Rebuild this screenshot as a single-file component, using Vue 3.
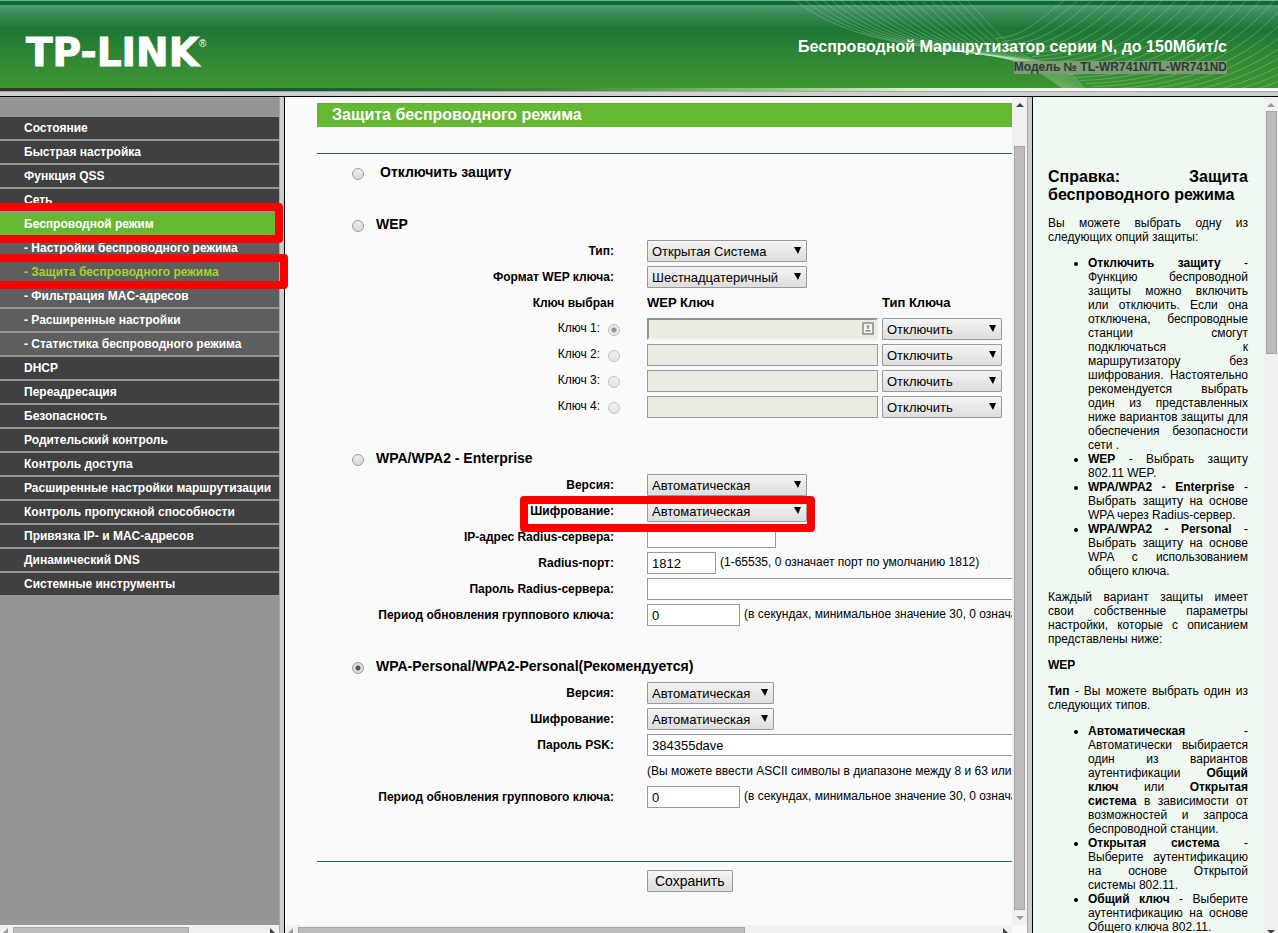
<script setup>
import { reactive, ref } from 'vue'

const menu = [
  { text: 'Состояние' },
  { text: 'Быстрая настройка' },
  { text: 'Функция QSS' },
  { text: 'Сеть' },
  { text: 'Беспроводной режим', kind: 'current', mark: 'mark-section' },
  { text: '- Настройки беспроводного режима', kind: 'sub' },
  { text: '- Защита беспроводного режима', kind: 'sub chosen', mark: 'mark-page' },
  { text: '- Фильтрация MAC-адресов', kind: 'sub' },
  { text: '- Расширенные настройки', kind: 'sub' },
  { text: '- Статистика беспроводного режима', kind: 'sub' },
  { text: 'DHCP' },
  { text: 'Переадресация' },
  { text: 'Безопасность' },
  { text: 'Родительский контроль' },
  { text: 'Контроль доступа' },
  { text: 'Расширенные настройки маршрутизации' },
  { text: 'Контроль пропускной способности' },
  { text: 'Привязка IP- и MAC-адресов' },
  { text: 'Динамический DNS' },
  { text: 'Системные инструменты' },
]

const mode = ref('psk')
const activeKey = ref(1)
const form = reactive({ keys: ['', '', '', ''], ip: '', port: '1812', secret: '', period: '0', psk: '384355dave', pskPeriod: '0' })

const fallingLines = Array.from({ length: 20 }, (_, i) =>
  `M${8 + i * 9} 0C${50 + i * 9} ${34 + i / 2} ${110 + i * 6} ${44 + i / 2} ${180 + i * 4} ${52 + i / 2}S${250 + i * 2} ${74 + i / 3} ${282 + i} 92`)
const risingLines = Array.from({ length: 26 }, (_, i) =>
  `M${208 + i * 6} ${38 + i * 3}C${236 + i * 10} ${36 + i * 3} ${250 + i * 13} ${20 + i * 2} ${276 + i * 14} 0`)
</script>

<template>
  <div class="page">
    <header class="banner">
      <svg class="waves" viewBox="0 0 490 88" preserveAspectRatio="xMaxYMid slice" aria-hidden="true">
        <path v-for="(d, i) in fallingLines" :key="'f' + i" :d="d" />
        <path v-for="(d, i) in risingLines" :key="'r' + i" :d="d" />
      </svg>
      <div class="logo">TP-LINK<sup>®</sup></div>
      <div class="product">
        <div class="product-name">Беспроводной Маршрутизатор серии N, до 150Мбит/с</div>
        <div class="product-model">Модель № TL-WR741N/TL-WR741ND</div>
      </div>
    </header>
    <div class="strip"></div>
    <div class="frames">
      <nav class="side">
        <ul class="menu">
          <li v-for="m in menu" :key="m.text" :class="m.kind">
            <a href="#">{{ m.text }}</a>
            <span v-if="m.mark" class="mark" :class="m.mark"></span>
          </li>
        </ul>
        <div class="hbar"><i class="arrow left dim"></i><i class="thumb side-thumb"></i><i class="arrow right"></i></div>
      </nav>
      <div class="divider"></div>
      <main class="center">
        <form class="form" @submit.prevent>
          <h1>Защита беспроводного режима</h1>
          <div class="rows">
            <div class="choice off">
              <input id="m-off" v-model="mode" type="radio" name="mode" value="off"><label for="m-off">Отключить защиту</label>
            </div>
            <div class="blank"></div>

            <div class="choice">
              <input id="m-wep" v-model="mode" type="radio" name="mode" value="wep"><label for="m-wep">WEP</label>
            </div>
            <div class="row">
              <label for="wep-type">Тип:</label>
              <span class="pick wide"><select id="wep-type"><option>Открытая Система</option></select></span>
            </div>
            <div class="row">
              <label for="wep-format">Формат WEP ключа:</label>
              <span class="pick wide"><select id="wep-format"><option>Шестнадцатеричный</option></select></span>
            </div>
            <div class="row heads"><span class="cap">Ключ выбран</span><b class="key-col">WEP Ключ</b><b>Тип Ключа</b></div>
            <div v-for="n in 4" :key="n" class="row key">
              <label :for="'key-' + n"><span class="key-name">Ключ {{ n }}:</span><input :id="'key-' + n" v-model="activeKey" type="radio" name="key" :value="n" disabled></label>
              <span class="key-field" :class="{ first: n === 1 }">
                <input v-model="form.keys[n - 1]" type="text" :aria-label="'WEP Ключ ' + n" disabled>
                <svg v-if="n === 1" viewBox="0 0 12 13" aria-hidden="true">
                  <rect x="1" y="1" width="10" height="11" fill="#f2f2ee" stroke="#8a8a8a" stroke-width="1.5" />
                  <circle cx="6" cy="4.5" r="1.3" fill="#888" /><path d="M5.3 5.5h1.4v1.6h-1.4zM3.5 8h5v1.5h-5z" fill="#888" />
                </svg>
              </span>
              <span class="pick key-type"><select :aria-label="'Тип Ключа ' + n" disabled><option>Отключить</option></select></span>
            </div>
            <div class="blank"></div>

            <div class="choice">
              <input id="m-ent" v-model="mode" type="radio" name="mode" value="ent"><label for="m-ent">WPA/WPA2 - Enterprise</label>
            </div>
            <div class="row">
              <label for="ent-ver">Версия:</label>
              <span class="pick wide"><select id="ent-ver"><option>Автоматическая</option></select></span>
            </div>
            <div class="row">
              <label for="ent-enc">Шифрование:</label>
              <span class="pick wide"><select id="ent-enc"><option>Автоматическая</option></select></span>
              <span class="mark mark-cipher"></span>
            </div>
            <div class="row">
              <label for="ip">IP-адрес Radius-сервера:</label><input id="ip" v-model="form.ip" class="w-ip" type="text">
            </div>
            <div class="row">
              <label for="port">Radius-порт:</label>
              <input id="port" v-model="form.port" class="w-port" type="text"><span class="hint">(1-65535, 0 означает порт по умолчанию 1812)</span>
            </div>
            <div class="row">
              <label for="secret">Пароль Radius-сервера:</label><input id="secret" v-model="form.secret" class="w-long" type="text">
            </div>
            <div class="row">
              <label for="period">Период обновления группового ключа:</label>
              <input id="period" v-model="form.period" class="w-period" type="text"><span class="hint">(в секундах, минимальное значение 30, 0 означает</span>
            </div>
            <div class="blank"></div>

            <div class="choice">
              <input id="m-psk" v-model="mode" type="radio" name="mode" value="psk"><label for="m-psk">WPA-Personal/WPA2-Personal(Рекомендуется)</label>
            </div>
            <div class="row">
              <label for="psk-ver">Версия:</label>
              <span class="pick narrow"><select id="psk-ver"><option>Автоматическая</option></select></span>
            </div>
            <div class="row">
              <label for="psk-enc">Шифрование:</label>
              <span class="pick narrow"><select id="psk-enc"><option>Автоматическая</option></select></span>
            </div>
            <div class="row">
              <label for="psk">Пароль PSK:</label><input id="psk" v-model="form.psk" class="w-long" type="text">
            </div>
            <div class="row">
              <span class="cap"></span><span class="note">(Вы можете ввести ASCII символы в диапазоне между 8 и 63 или</span>
            </div>
            <div class="row">
              <label for="psk-period">Период обновления группового ключа:</label>
              <input id="psk-period" v-model="form.pskPeriod" class="w-period" type="text"><span class="hint">(в секундах, минимальное значение 30, 0 означает</span>
            </div>
          </div>
          <div class="actions"><button type="submit">Сохранить</button></div>
        </form>
        <div class="vbar"><i class="arrow up"></i><i class="thumb center-vthumb"></i><i class="arrow down dim"></i></div>
        <div class="hbar"><i class="arrow left dim"></i><i class="thumb center-thumb"></i><i class="arrow right"></i></div>
      </main>
      <div class="divider right-divider"></div>
      <aside class="help">
        <div class="help-text">
          <h2>Справка: Защита беспроводного режима</h2>
          <p>Вы можете выбрать одну из следующих опций защиты:</p>
          <ul>
            <li><b>Отключить защиту</b> - Функцию беспроводной защиты можно включить или отключить. Если она отключена, беспроводные станции смогут подключаться к маршрутизатору без шифрования. Настоятельно рекомендуется выбрать один из представленных ниже вариантов защиты для обеспечения безопасности сети .</li>
            <li><b>WEP</b> - Выбрать защиту 802.11 WEP.</li>
            <li><b>WPA/WPA2 - Enterprise</b> - Выбрать защиту на основе WPA через Radius-сервер.</li>
            <li><b>WPA/WPA2 - Personal</b> - Выбрать защиту на основе WPA с использованием общего ключа.</li>
          </ul>
          <p>Каждый вариант защиты имеет свои собственные параметры настройки, которые с описанием представлены ниже:</p>
          <p><b>WEP</b></p>
          <p><b>Тип</b> - Вы можете выбрать один из следующих типов.</p>
          <ul>
            <li><b>Автоматическая</b> - Автоматически выбирается один из вариантов аутентификации <b>Общий ключ</b> или <b>Открытая система</b> в зависимости от возможностей и запроса беспроводной станции.</li>
            <li><b>Открытая система</b> - Выберите аутентификацию на основе Открытой системы 802.11.</li>
            <li><b>Общий ключ</b> - Выберите аутентификацию на основе Общего ключа 802.11.</li>
          </ul>
        </div>
        <div class="vbar"><i class="arrow up dim"></i><i class="thumb help-thumb"></i><i class="arrow down end"></i></div>
      </aside>
    </div>
  </div>
</template>

<style>
body { margin: 0; overflow: hidden; }
</style>

<style scoped>
* { box-sizing: border-box; }
.page {
  display: flex; flex-direction: column; height: 100vh; overflow: hidden;
  font-family: "Liberation Sans", Arial, sans-serif; font-size: 12px; line-height: 14px; color: #000;
}

.banner {
  position: relative; flex: none; display: flex; justify-content: space-between; height: 88px; padding: 0 51px 0 26px;
  border-top: 1px solid #74b48c; color: #fff;
  background: linear-gradient(#0c6838 0 4px, #519a70 4px, #35874f 15px, #1c7636 28px, #2c8434 50px, #3f9433 87px);
}
.waves { position: absolute; right: 0; top: 0; width: 490px; height: 100%; fill: none; stroke: #c8eccb; stroke-opacity: .28; stroke-width: 1; }
.logo { position: relative; margin-top: 32px; font: bold 39px/40px "DejaVu Sans", sans-serif; -webkit-text-stroke: 1px #fff; }
.logo sup { font: 10px/10px "Liberation Sans", sans-serif; vertical-align: 19px; -webkit-text-stroke: 0; }
.product { position: relative; display: flex; flex-direction: column; align-items: flex-end; padding-top: 36px; font-weight: bold; }
.product-name { font-size: 16px; line-height: 20px; }
.product-model { margin-top: 4px; line-height: 13px; color: #2e3a30; background: #7c9c78; }
.strip {
  flex: none; height: 9px; border-bottom: 1px solid #000;
  background: linear-gradient(#a8a8a8, #a8a8a8) 0 3px / 100% 1px no-repeat,
    linear-gradient(90deg, #38302c, #105c38 24%, #3f8c3c 45%, #8cc47c 60%, #e0f0d8 72%, #fff 90%) 0 0 / 100% 3px no-repeat, #cfcfcf;
}

.frames { flex: 1; min-height: 0; display: grid; grid-template-columns: 279px 6px minmax(0, 1fr) 6px 245px; }
.divider { background: #cdcdcd; border-left: 1px solid #a8a8a8; border-right: 1px solid #000; }

.side { display: flex; flex-direction: column; min-height: 0; background: #969696; }
.menu { flex: 1; margin: 0; padding: 20px 0 0; list-style: none; }
.menu li { position: relative; height: 22px; margin-bottom: 2px; background: #404040; }
.menu a { display: block; padding-left: 24px; line-height: 22px; font-weight: bold; color: #fff; text-decoration: none; white-space: nowrap; }
.menu .current { background: #65b932; }
.menu .sub { background: #5e5e5e; }
.menu .chosen a { color: #a6d42f; }

.mark { position: absolute; z-index: 2; border: 8px solid #f00; border-radius: 4px; pointer-events: none; }
.mark-section { left: -8px; right: -4px; top: -10px; height: 40px; }
.mark-page { left: -8px; right: -9px; top: -7px; height: 35px; }
.mark-cipher { left: 203px; width: 295px; top: -2px; height: 36px; }

.center { display: grid; grid-template: minmax(0, 1fr) 8px / minmax(0, 1fr) 15px; min-height: 0; background: #fafafa; }
.form { overflow: hidden; padding: 6px 0 0 32px; }
h1 { margin: 0; padding-left: 15px; font-size: 16px; line-height: 24px; color: #fff; background: #65b932; }
.rows { margin-top: 26px; padding: 6px 0 51px; border-top: 1px solid #1c7044; border-bottom: 1px solid #1c7044; }
.blank { height: 26px; }
.choice { display: flex; align-items: center; height: 26px; padding-left: 35px; gap: 12px; font-size: 14px; font-weight: bold; }
.choice input { margin-top: 2px; }
.choice label { line-height: 16px; padding-bottom: 2px; white-space: nowrap; }
.off { gap: 16px; }
.row { position: relative; display: flex; align-items: center; height: 26px; white-space: nowrap; }
.row > label, .cap { flex: none; width: 297px; margin-right: 33px; text-align: right; font-weight: bold; }
.row.key > label { display: flex; justify-content: flex-end; align-items: center; gap: 8px; width: 303px; margin-right: 27px; font-weight: normal; }
.key-name { padding-bottom: 2px; }
.key label input { margin-top: 2px; }
.heads b { font-size: 13px; }
.key-col { width: 235px; }

input, select, button { margin: 0; font-family: inherit; color: #000; }
input[type="text"] { flex: none; height: 22px; padding: 0 4px; border: 1px solid #9a9a9a; border-radius: 0; background: #fff; font-size: 13px; }
input[type="radio"] {
  flex: none; appearance: none; width: 12px; height: 12px; border: 1px solid #9c9c9c; border-radius: 50%;
  background: linear-gradient(#ececec, #d8d8d8);
}
input[type="radio"]:checked { background: radial-gradient(#555 0 2px, #dedede 3px); }
input[type="radio"]:disabled { opacity: .6; }
.w-ip { width: 129px; }
.w-port { width: 69px; }
.w-period { width: 93px; }
.w-long { width: 480px; }
.hint { margin-left: 4px; padding-bottom: 2px; }
.key-field { position: relative; flex: none; width: 231px; height: 22px; margin-right: 4px; }
.key-field input[type="text"] { width: 100%; background: #ebebe4; }
.first input[type="text"] { border: 2px solid; border-color: #949494 #f0f0ec #f0f0ec #949494; }
.key-field svg { position: absolute; right: 4px; top: 4px; width: 12px; height: 13px; }

.pick { position: relative; flex: none; height: 22px; }
.pick::after {
  content: ""; position: absolute; right: 6px; top: 7px; pointer-events: none;
  border: 3px solid transparent; border-top: 7px solid #000; border-bottom: 0; border-left-width: 4px;
}
.pick select {
  appearance: none; width: 100%; height: 22px; padding: 0 4px; border: 1px solid #999; border-radius: 1px; opacity: 1;
  font-size: 13px; background: linear-gradient(#f5f5f5, #ddd);
}
.wide { width: 160px; }
.narrow { width: 127px; }
.key-type { width: 120px; }
.actions { padding: 8px 0 0 330px; }
.actions button { height: 22px; padding: 0 7px; border: 1px solid #999; border-radius: 1px; font-size: 14px; background: linear-gradient(#f5f5f5, #ddd); }

.vbar, .hbar { display: flex; align-items: center; background: #f1f1f1; overflow: hidden; }
.vbar { flex-direction: column; }
.hbar { flex: none; height: 8px; align-items: flex-start; }
.thumb { flex: none; background: #bcbcbc; border: 1px solid #a6a6a6; }
.arrow { flex: none; width: 0; height: 0; border: 4px solid transparent; color: #444; }
.dim { color: #999; }
.up { margin-top: 2px; border-bottom-color: currentColor; }
.down { margin-bottom: 1px; border-top-color: currentColor; }
.left { margin-top: 3px; border-right-color: currentColor; border-width: 5px 5px 5px 0; margin-left: 3px; }
.right { margin: 3px 4px 0 auto; border-left-color: currentColor; border-width: 5px 0 5px 5px; }
.hbar .thumb { height: 15px; margin: 2px 0 0 5px; }
.side-thumb { width: 176px; }
.center-thumb { width: 447px; }
.center-vthumb { flex: 1; width: 11px; margin: 39px 0 6px; }

.help { display: grid; grid-template-columns: minmax(0, 1fr) 14px; min-height: 0; background: #eff8f1; }
.help-text { overflow: hidden; padding: 71px 16px 0 15px; text-align: justify; }
.help h2 { margin: 0; font-size: 16px; line-height: 18px; }
.help p, .help ul { margin: 12px 0; }
.help ul { padding-left: 40px; }
.help-thumb { width: 11px; height: 243px; margin-top: 4px; }
.end { margin: auto 0 -5px; }
</style>
